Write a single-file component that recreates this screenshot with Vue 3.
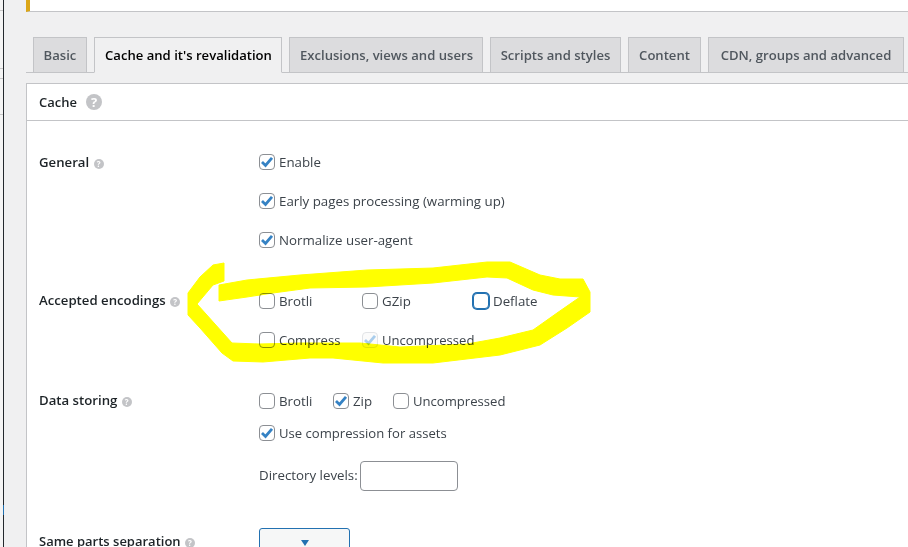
<script setup>
const tabs = [
  { label: 'Basic', cls: 't1' },
  { label: "Cache and it's revalidation", cls: 't2 active' },
  { label: 'Exclusions, views and users', cls: 't3' },
  { label: 'Scripts and styles', cls: 't4' },
  { label: 'Content', cls: 't5' },
  { label: 'CDN, groups and advanced', cls: 't6' }
]
const check = 'M3 8 L6.5 11.5 L13 3.8'
const marker = 'M224 263 L213 265 L200 277 L188 293 L188 315 L200 328 L222 353 L233 361 L263 362 L310 358 L333 358 L383 363 L433 363 L500 355 L540 345 L567 328 L590 312 L590 292 L583 279 L560 279 L540 275 L510 262 L487 262 L433 268 L367 270 L300 275 L247 280 L219 285 L219 301 L247 297 L273 293 L310 288 L367 287 L433 283 L487 277 L507 278 L533 290 L553 295 L580 297 L557 313 L533 330 L500 338 L467 344 L423 346 L400 347 L360 343 L300 343 L259 344 L232 343 L197 304 L213 285 L224 281 Z'
</script>

<template>
  <div class="page">
    <div class="strip">
      <i class="s s1"></i><i class="s s2"></i><i class="s s3"></i><i class="s s4"></i>
      <i class="blue"></i>
    </div>
    <main class="main">
      <div class="notice"></div>
      <nav class="tabs">
        <a v-for="t in tabs" :key="t.label" class="tab" :class="t.cls">{{ t.label }}</a>
      </nav>
      <section class="panel">
        <header class="panel-head">
          <h2>Cache</h2>
          <span class="help big">?</span>
        </header>
        <div class="body">
          <div class="row r-general">
            <div class="label">General <span class="help">?</span></div>
            <div class="stack">
              <label class="opt"><span class="box"><svg viewBox="0 0 16 16"><path :d="check" /></svg></span>Enable</label>
              <label class="opt"><span class="box"><svg viewBox="0 0 16 16"><path :d="check" /></svg></span>Early pages processing (warming up)</label>
              <label class="opt"><span class="box"><svg viewBox="0 0 16 16"><path :d="check" /></svg></span>Normalize user-agent</label>
            </div>
          </div>
          <div class="row r-enc">
            <div class="label up">Accepted encodings <span class="help">?</span></div>
            <div class="enc">
              <label class="opt"><span class="box"></span>Brotli</label>
              <label class="opt"><span class="box"></span>GZip</label>
              <label class="opt"><span class="box focus"></span>Deflate</label>
              <label class="opt narrow"><span class="box"></span>Compress</label>
              <label class="opt narrow"><span class="box off"><svg viewBox="0 0 16 16"><path :d="check" /></svg></span>Uncompressed</label>
            </div>
          </div>
          <div class="row r-data">
            <div class="label up">Data storing <span class="help">?</span></div>
            <div class="data">
              <div class="store">
                <label class="opt"><span class="box"></span>Brotli</label>
                <label class="opt"><span class="box"><svg viewBox="0 0 16 16"><path :d="check" /></svg></span>Zip</label>
                <label class="opt narrow"><span class="box"></span>Uncompressed</label>
              </div>
              <label class="opt narrow"><span class="box"><svg viewBox="0 0 16 16"><path :d="check" /></svg></span>Use compression for assets</label>
              <div class="levels"><span class="levels-text">Directory levels:</span><span class="input"></span></div>
            </div>
          </div>
          <div class="row">
            <div class="label low">Same parts separation <span class="help">?</span></div>
            <div class="select"><i></i></div>
          </div>
        </div>
      </section>
    </main>
    <svg class="marker" viewBox="0 0 908 547" aria-hidden="true"><path :d="marker" /></svg>
  </div>
</template>

<style>
html, body { margin: 0; background: #f0f0f1; overflow: hidden; }
</style>

<style scoped>
.page {
  position: relative;
  display: flex;
  width: 908px;
  height: 547px;
  overflow: hidden;
  background: #f0f0f1;
  font-family: "Open Sans", "Noto Sans", sans-serif;
  font-size: 13.3px;
  color: #3c434a;
}
.strip {
  position: relative;
  flex: 0 0 3px;
  background: #f4f4f4;
  border-right: 1px solid #23282d;
}
.s { position: absolute; left: 0; width: 3px; height: 1px; background: #c8c8c8; }
.s1 { top: 10px; }
.s2 { top: 68px; }
.s3 { top: 78px; }
.s4 { top: 114px; }
.blue { position: absolute; top: 505px; left: 3px; width: 1px; height: 10px; background: #2271b1; }
.main { flex: 1; min-width: 0; padding-left: 22px; }
.notice {
  height: 11px;
  margin-right: -8px;
  background: #fff;
  border-left: 4px solid #dba617;
  border-bottom: 1px solid #c3c4c7;
}
.tabs {
  display: flex;
  height: 35px;
  margin-top: 25px;
  padding-left: 7px;
  gap: 7px;
  border-bottom: 1px solid #c3c4c7;
  margin-right: -8px;
}
.tab {
  box-sizing: border-box;
  height: 36px;
  border: 1px solid #c3c4c7;
  background: #dcdcde;
  color: #50575e;
  font-weight: 600;
  font-size: 13.1px;
  line-height: 34px;
  text-align: center;
  white-space: nowrap;
}
.tab.active { background: #f0f0f1; color: #000; border-bottom-color: #f0f0f1; }
.t1 { width: 54px; }
.t2 { width: 188px; padding-left: 1px; }
.t3 { width: 194px; padding-left: 1px; }
.t4 { width: 131px; }
.t5 { width: 73px; }
.t6 { width: 196px; }
.panel {
  margin-top: 10px;
  margin-right: -8px;
  height: 470px;
  background: #fff;
  border: 1px solid #c3c4c7;
  border-width: 1px 0 0 1px;
}
.panel-head {
  display: flex;
  align-items: center;
  height: 36px;
  padding-left: 12px;
  border-bottom: 1px solid #c3c4c7;
}
h2 { margin: 0; font-size: 13px; font-weight: 600; color: #1d2327; }
.help {
  display: inline-block;
  width: 10px;
  height: 10px;
  margin-left: 1px;
  border-radius: 50%;
  background: #c3c4c7;
  color: #fff;
  font-size: 8px;
  font-weight: 700;
  line-height: 10px;
  text-align: center;
  vertical-align: 0;
}
.help.big {
  width: 16px;
  height: 16px;
  margin-left: 9px;
  font-size: 13px;
  line-height: 16px;
}
.body { padding: 31px 0 0 12px; }
.row {
  display: grid;
  grid-template-columns: 220px 1fr;
  margin-bottom: 41px;
}
.r-data { margin-bottom: 37px; }
.label {
  font-weight: 600;
  font-size: 13.2px;
  color: #1d2327;
  line-height: 20px;
  white-space: nowrap;
}
.label.up { margin-top: -1px; }
.label.low { margin-top: 3px; font-size: 13px; }
.stack { display: grid; row-gap: 19px; }
.opt {
  display: flex;
  align-items: center;
  height: 20px;
  white-space: nowrap;
}
.opt.narrow { font-size: 13.1px; }
.box {
  flex: 0 0 auto;
  box-sizing: border-box;
  width: 16px;
  height: 16px;
  margin-right: 4px;
  border: 1px solid #8c8f94;
  border-radius: 4px;
  background: #fff;
}
.box svg { display: block; width: 16px; height: 16px; margin: -1px; overflow: visible; }
.box path { fill: none; stroke: #3582c4; stroke-width: 2.8; }
.box.focus { border-color: #2271b1; box-shadow: 0 0 0 1px #2271b1; }
.box.off { border-color: #e2e4e7; background: #fbfbfb; }
.box.off path { stroke: #a9cdec; }
.enc {
  display: grid;
  grid-template-columns: 103px 111px 1fr;
  row-gap: 19px;
}
.data { display: grid; }
.store {
  display: grid;
  grid-template-columns: 74px 60px 1fr;
  margin-bottom: 12px;
}
.levels {
  display: flex;
  align-items: center;
  margin-top: 18px;
  white-space: nowrap;
}
.levels-text { position: relative; top: -1px; }
.input {
  box-sizing: border-box;
  width: 98px;
  height: 30px;
  margin-left: 2px;
  border: 1px solid #8c8f94;
  border-radius: 4px;
  background: #fff;
}
.select {
  box-sizing: border-box;
  width: 91px;
  height: 30px;
  border: 1px solid #2271b1;
  border-radius: 3px;
  background: #f6f7f7;
  position: relative;
}
.select i {
  position: absolute;
  left: 41px;
  top: 11px;
  border-style: solid;
  border-width: 6px 4px 0;
  border-color: #2271b1 transparent transparent;
}
.marker {
  position: absolute;
  inset: 0;
  width: 908px;
  height: 547px;
  mix-blend-mode: multiply;
  pointer-events: none;
}
.marker path { fill: #ffff00; stroke: #ffff00; stroke-width: 1; stroke-linejoin: round; }
</style>
